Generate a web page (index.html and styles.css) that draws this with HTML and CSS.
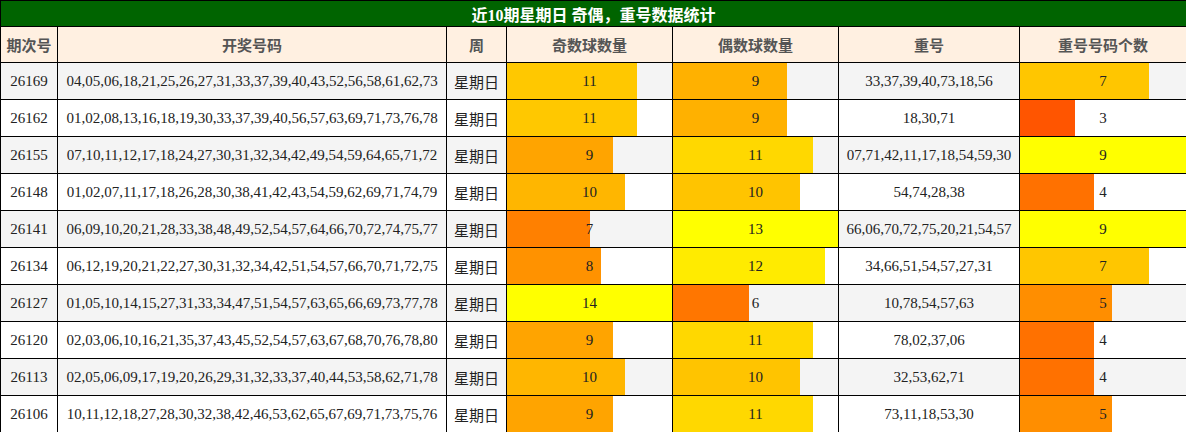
FILE: index.html
```html
<!DOCTYPE html>
<html lang="zh">
<head>
<meta charset="utf-8">
<title>近10期星期日 奇偶，重号数据统计</title>
<link rel="stylesheet" href="styles.css">
</head>
<body>
<table class="stats">
  <colgroup>
    <col class="c-issue"><col class="c-nums"><col class="c-week"><col class="c-odd"><col class="c-even"><col class="c-rep"><col class="c-repn">
  </colgroup>
  <thead>
    <tr class="title-row"><th colspan="7">近10期星期日 奇偶，重号数据统计</th></tr>
    <tr class="head-row"><th>期次号</th><th>开奖号码</th><th>周</th><th>奇数球数量</th><th>偶数球数量</th><th>重号</th><th>重号号码个数</th></tr>
  </thead>
  <tbody>
    <tr><td>26169</td><td>04,05,06,18,21,25,26,27,31,33,37,39,40,43,52,56,58,61,62,73</td><td class="week">星期日</td><td class="bar" style="--w:78.571%;--c:rgb(255,200,0)">11</td><td class="bar" style="--w:69.231%;--c:rgb(255,177,0)">9</td><td>33,37,39,40,73,18,56</td><td class="bar" style="--w:77.778%;--c:rgb(255,198,0)">7</td></tr>
    <tr><td>26162</td><td>01,02,08,13,16,18,19,30,33,37,39,40,56,57,63,69,71,73,76,78</td><td class="week">星期日</td><td class="bar" style="--w:78.571%;--c:rgb(255,200,0)">11</td><td class="bar" style="--w:69.231%;--c:rgb(255,177,0)">9</td><td>18,30,71</td><td class="bar" style="--w:33.333%;--c:rgb(255,85,0)">3</td></tr>
    <tr><td>26155</td><td>07,10,11,12,17,18,24,27,30,31,32,34,42,49,54,59,64,65,71,72</td><td class="week">星期日</td><td class="bar" style="--w:64.286%;--c:rgb(255,164,0)">9</td><td class="bar" style="--w:84.615%;--c:rgb(255,216,0)">11</td><td>07,71,42,11,17,18,54,59,30</td><td class="bar" style="--w:100%;--c:rgb(255,255,0)">9</td></tr>
    <tr><td>26148</td><td>01,02,07,11,17,18,26,28,30,38,41,42,43,54,59,62,69,71,74,79</td><td class="week">星期日</td><td class="bar" style="--w:71.429%;--c:rgb(255,182,0)">10</td><td class="bar" style="--w:76.923%;--c:rgb(255,196,0)">10</td><td>54,74,28,38</td><td class="bar" style="--w:44.444%;--c:rgb(255,113,0)">4</td></tr>
    <tr><td>26141</td><td>06,09,10,20,21,28,33,38,48,49,52,54,57,64,66,70,72,74,75,77</td><td class="week">星期日</td><td class="bar" style="--w:50%;--c:rgb(255,128,0)">7</td><td class="bar" style="--w:100%;--c:rgb(255,255,0)">13</td><td>66,06,70,72,75,20,21,54,57</td><td class="bar" style="--w:100%;--c:rgb(255,255,0)">9</td></tr>
    <tr><td>26134</td><td>06,12,19,20,21,22,27,30,31,32,34,42,51,54,57,66,70,71,72,75</td><td class="week">星期日</td><td class="bar" style="--w:57.143%;--c:rgb(255,146,0)">8</td><td class="bar" style="--w:92.308%;--c:rgb(255,235,0)">12</td><td>34,66,51,54,57,27,31</td><td class="bar" style="--w:77.778%;--c:rgb(255,198,0)">7</td></tr>
    <tr><td>26127</td><td>01,05,10,14,15,27,31,33,34,47,51,54,57,63,65,66,69,73,77,78</td><td class="week">星期日</td><td class="bar" style="--w:100%;--c:rgb(255,255,0)">14</td><td class="bar" style="--w:46.154%;--c:rgb(255,118,0)">6</td><td>10,78,54,57,63</td><td class="bar" style="--w:55.556%;--c:rgb(255,142,0)">5</td></tr>
    <tr><td>26120</td><td>02,03,06,10,16,21,35,37,43,45,52,54,57,63,67,68,70,76,78,80</td><td class="week">星期日</td><td class="bar" style="--w:64.286%;--c:rgb(255,164,0)">9</td><td class="bar" style="--w:84.615%;--c:rgb(255,216,0)">11</td><td>78,02,37,06</td><td class="bar" style="--w:44.444%;--c:rgb(255,113,0)">4</td></tr>
    <tr><td>26113</td><td>02,05,06,09,17,19,20,26,29,31,32,33,37,40,44,53,58,62,71,78</td><td class="week">星期日</td><td class="bar" style="--w:71.429%;--c:rgb(255,182,0)">10</td><td class="bar" style="--w:76.923%;--c:rgb(255,196,0)">10</td><td>32,53,62,71</td><td class="bar" style="--w:44.444%;--c:rgb(255,113,0)">4</td></tr>
    <tr><td>26106</td><td>10,11,12,18,27,28,30,32,38,42,46,53,62,65,67,69,71,73,75,76</td><td class="week">星期日</td><td class="bar" style="--w:64.286%;--c:rgb(255,164,0)">9</td><td class="bar" style="--w:84.615%;--c:rgb(255,216,0)">11</td><td>73,11,18,53,30</td><td class="bar" style="--w:55.556%;--c:rgb(255,142,0)">5</td></tr>
  </tbody>
</table>
</body>
</html>
```
FILE: styles.css
```css
html, body {
  margin: 0;
  padding: 0;
  background: #ffffff;
}

.stats {
  border-collapse: collapse;
  table-layout: fixed;
  width: 1186px;
  font-family: "Liberation Serif", "Noto Sans CJK SC", serif;
  font-size: 15px;
  color: #222222;
}

.c-issue { width: 57px; }
.c-nums { width: 389px; }
.c-week { width: 60px; }
.c-odd { width: 166px; }
.c-even { width: 166px; }
.c-rep { width: 181px; }
.c-repn { width: 167px; }

.stats th,
.stats td {
  border: 1px solid #000000;
  padding: 0;
  text-align: center;
  vertical-align: middle;
  white-space: nowrap;
  overflow: hidden;
}

.title-row th {
  background: #006400;
  color: #ffffff;
  font-size: 16px;
  font-weight: bold;
  height: 25px;
}

.head-row th {
  background: #fff0e1;
  color: #555555;
  font-weight: bold;
  font-size: 15px;
  height: 35px;
}

.stats tbody td {
  height: 36px;
}

.stats tbody tr:nth-child(odd) {
  background: #f4f4f4;
}

.stats tbody tr:nth-child(even) {
  background: #ffffff;
}

.stats td.week {
  font-family: "Noto Sans CJK SC", sans-serif;
  font-size: 15px;
  color: #222222;
}

.stats td.bar {
  background-image: linear-gradient(to right, var(--c) var(--w), transparent var(--w));
  background-repeat: no-repeat;
}
```
